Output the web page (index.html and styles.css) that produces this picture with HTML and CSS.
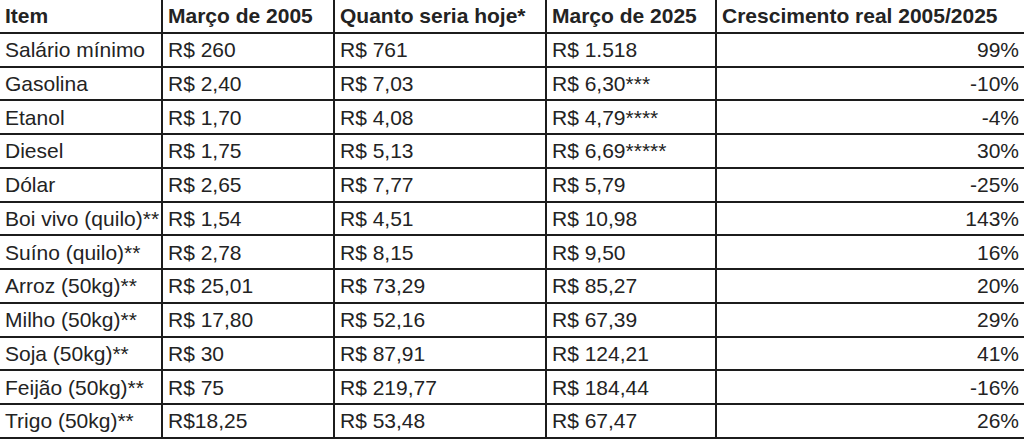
FILE: index.html
```html
<!DOCTYPE html>
<html lang="pt-BR">
<head>
<meta charset="utf-8">
<link rel="stylesheet" href="styles.css">
</head>
<body>
<table class="prices">
  <colgroup>
    <col class="c1"><col class="c2"><col class="c3"><col class="c4"><col class="c5">
  </colgroup>
  <thead>
    <tr><th>Item</th><th>Março de 2005</th><th>Quanto seria hoje*</th><th>Março de 2025</th><th>Crescimento real 2005/2025</th></tr>
  </thead>
  <tbody>
    <tr><td>Salário mínimo</td><td>R$ 260</td><td>R$ 761</td><td>R$ 1.518</td><td class="num">99%</td></tr>
    <tr><td>Gasolina</td><td>R$ 2,40</td><td>R$ 7,03</td><td>R$ 6,30***</td><td class="num">-10%</td></tr>
    <tr><td>Etanol</td><td>R$ 1,70</td><td>R$ 4,08</td><td>R$ 4,79****</td><td class="num">-4%</td></tr>
    <tr><td>Diesel</td><td>R$ 1,75</td><td>R$ 5,13</td><td>R$ 6,69*****</td><td class="num">30%</td></tr>
    <tr><td>Dólar</td><td>R$ 2,65</td><td>R$ 7,77</td><td>R$ 5,79</td><td class="num">-25%</td></tr>
    <tr><td>Boi vivo (quilo)**</td><td>R$ 1,54</td><td>R$ 4,51</td><td>R$ 10,98</td><td class="num">143%</td></tr>
    <tr><td>Suíno (quilo)**</td><td>R$ 2,78</td><td>R$ 8,15</td><td>R$ 9,50</td><td class="num">16%</td></tr>
    <tr><td>Arroz (50kg)**</td><td>R$ 25,01</td><td>R$ 73,29</td><td>R$ 85,27</td><td class="num">20%</td></tr>
    <tr><td>Milho (50kg)**</td><td>R$ 17,80</td><td>R$ 52,16</td><td>R$ 67,39</td><td class="num">29%</td></tr>
    <tr><td>Soja (50kg)**</td><td>R$ 30</td><td>R$ 87,91</td><td>R$ 124,21</td><td class="num">41%</td></tr>
    <tr><td>Feijão (50kg)**</td><td>R$ 75</td><td>R$ 219,77</td><td>R$ 184,44</td><td class="num">-16%</td></tr>
    <tr><td>Trigo (50kg)**</td><td>R$18,25</td><td>R$ 53,48</td><td>R$ 67,47</td><td class="num">26%</td></tr>
  </tbody>
</table>
</body>
</html>
```
FILE: styles.css
```css
html, body {
  margin: 0;
  padding: 0;
  background: #ffffff;
}

body {
  overflow: hidden;
}

.prices {
  border-collapse: collapse;
  table-layout: fixed;
  width: 1026px;
  margin-top: -1px;
  font-family: "Liberation Sans", Arial, sans-serif;
  font-size: 21px;
  color: #232323;
}

.c1 { width: 162px; }
.c2 { width: 172px; }
.c3 { width: 212px; }
.c4 { width: 170px; }
.c5 { width: 310px; }

.prices th,
.prices td {
  border: 2px solid #1c1c1c;
  height: 33.75px;
  padding: 1px 5px 0 5px;
  box-sizing: border-box;
  text-align: left;
  vertical-align: middle;
  white-space: nowrap;
  overflow: hidden;
  line-height: 24px;
}

.prices th {
  font-weight: bold;
  border-top: none;
}

.prices th:first-child,
.prices td:first-child {
  border-left: none;
}

.prices th:last-child,
.prices td:last-child {
  border-right: none;
}

.prices td.num {
  text-align: right;
  padding-right: 7px;
}
```
